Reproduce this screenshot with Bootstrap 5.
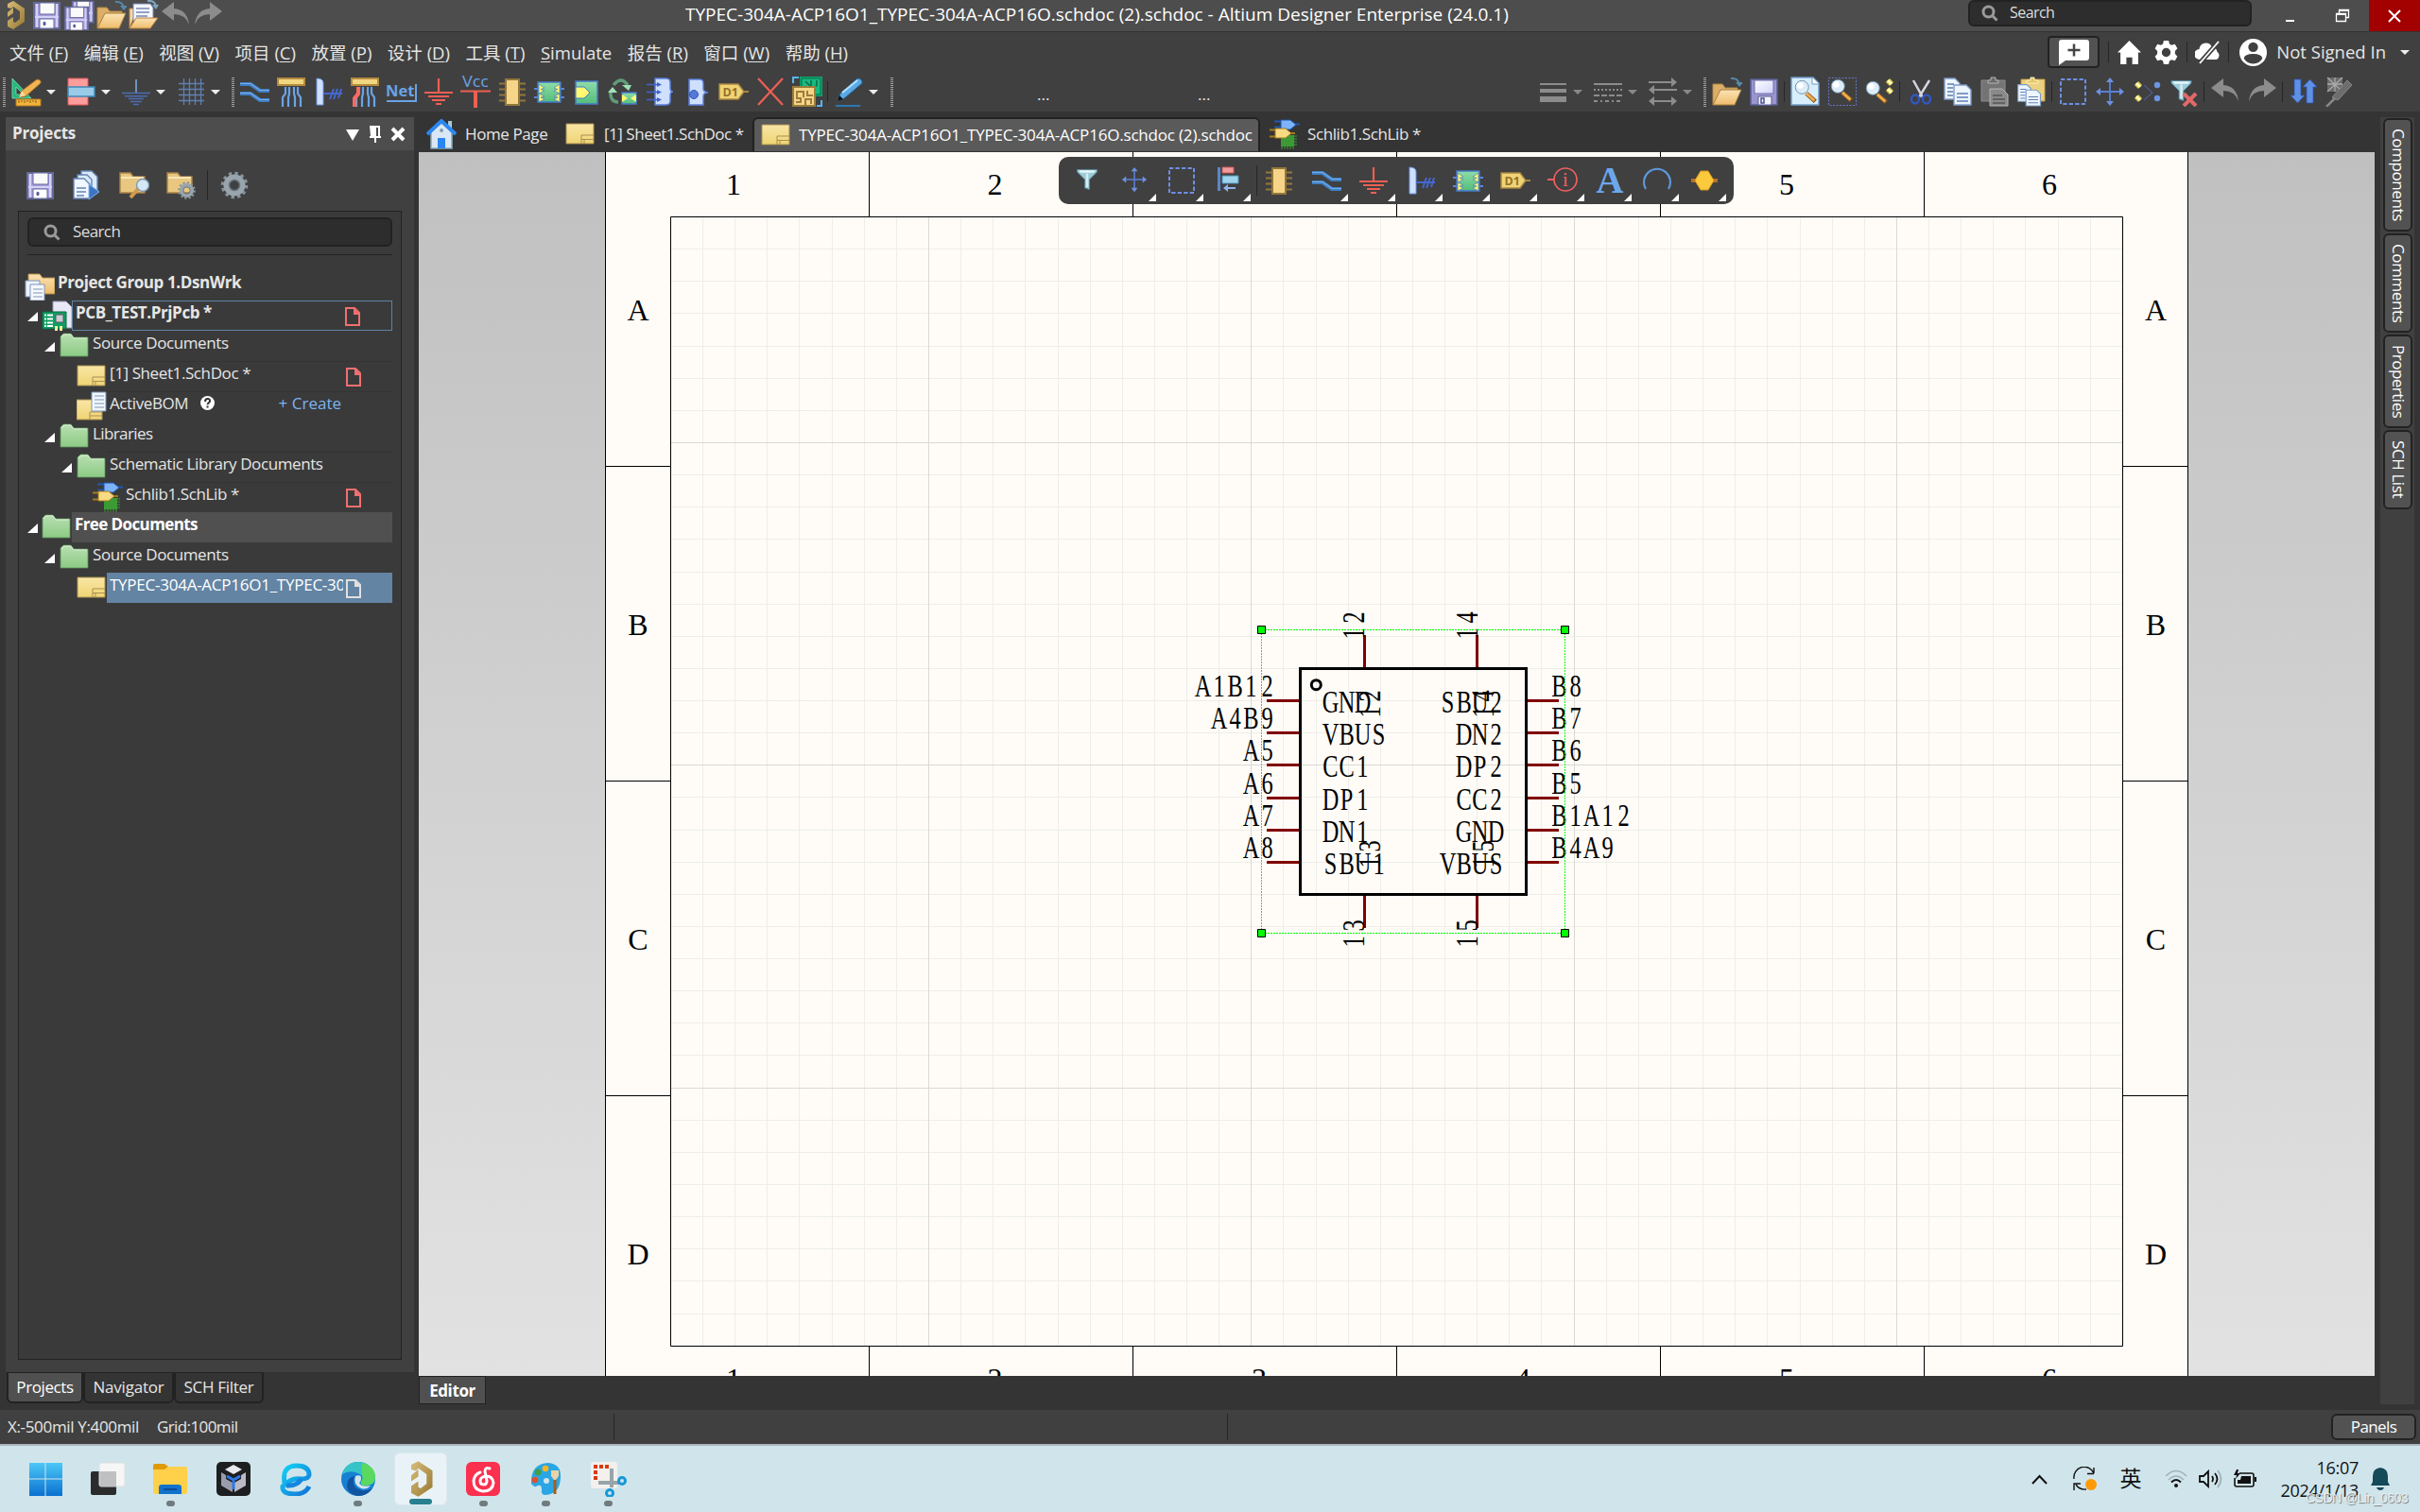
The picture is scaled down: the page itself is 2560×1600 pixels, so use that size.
<!DOCTYPE html>
<html lang="zh-CN">
<head>
<meta charset="utf-8">
<title>Altium Designer</title>
<link href="https://cdn.jsdelivr.net/npm/bootstrap@5.3.0/dist/css/bootstrap.min.css" rel="stylesheet">
<style>
html,body{height:100%}
body{width:2560px;height:1600px;overflow:hidden;background:#343434;color:#e6e6e6;font:17px/1.2 "Open Sans","Noto Sans CJK SC",sans-serif;letter-spacing:-.4px;white-space:nowrap}
svg{display:block;flex:none;letter-spacing:0}
.ic{width:32px;height:32px}
.titlebar{height:34px;background:#4d4d4d;border-bottom:1px solid #333}
.cell34{width:34px}
.app-title{color:#fff;font-size:19px;letter-spacing:0;padding:4px 0 0 487px}
.searchbox{background:#2d2d2d;border:2px solid #222;border-radius:6px;color:#ddd}
.topsearch{width:300px;height:28px;padding-left:12px;gap:12px;font-size:16px;letter-spacing:-.55px}
.winclose{width:54px;height:33px;background:#a30000}
.menubar{height:42px;background:#404040;font-size:18.5px;letter-spacing:0;padding-left:10px}
.menus{gap:16.5px;padding-top:2px}
.menubar u{text-underline-offset:2px;text-decoration-thickness:1px}
.vsep{width:1px;height:22px;background:#262626;flex:none}
.fbk{width:55px;height:34px;border:2px solid #222;border-radius:4px;background:#525252}
.toolbar{height:42px;background:#404040}
.tb{width:39px;height:34px;display:flex;align-items:center;justify-content:center;flex:none}
.dd{width:19px;flex:none;display:flex;padding-left:2px}
.dd::after{content:"";border:5px solid transparent;border-top-color:#eee;border-bottom:0}
.dim::after{border-top-color:#888}
.s5{width:5px;display:flex;justify-content:center;flex:none}
.grip{width:3px;height:31px;background:repeating-linear-gradient(#a0a0a0 0 1px,transparent 1px 2px);flex:none}
.main{height:1374px;padding-top:6px}
.leftpane{width:432px;margin-left:6px}
.pane-head{height:35px;background:#4d4d4d;font-weight:700;padding:0 5px 0 7px;letter-spacing:-.2px}
.pane-body{height:1293px;background:#404040;padding:0 13px}
.treebox{width:406px;height:1216px;border:1px solid #222;background:#3a3a3a;padding:6px 9px 0 9px}
.tree{margin:16px 0 0 -3px}
.tree-row{height:32px;display:flex}
.tree-row .lbl{flex:1;height:32px;padding:1px 0 0 3px;border-top:1px solid #343434;overflow:hidden;display:flex;justify-content:space-between;line-height:21px}
.tree-row .lbl.nb{border-color:transparent}
.tree-row .lbl.cur{border:1px solid #5f82a6}
.arrow{width:11px;height:10px;background:#fff;clip-path:polygon(100% 0,100% 100%,0 100%);margin-top:12px;flex:none}
.doc{margin-right:32px;margin-top:4px}
.btab{height:33px;border:2px solid #222;border-top-width:1px;border-radius:0 0 6px 6px;display:flex;align-items:center;justify-content:center}
.act{background:#505050;color:#fff}
.doctab{height:36px;display:flex;align-items:center}
.sheet-wrap{width:2069px;height:1295px;background:linear-gradient(#c0c0c0,#e2e2e2);position:relative;overflow:hidden}
.floatbar{position:absolute;left:677px;top:5px;width:714px;height:50px;border-radius:10px;background:#404040;padding-left:5px;display:flex}
.fb{width:50px;height:50px;padding:9px;position:relative}
.fb.m::after{content:"";position:absolute;right:2px;bottom:3px;width:8px;height:8px;background:#fff;clip-path:polygon(100% 0,100% 100%,0 100%)}
.rail{width:36px;height:1362px;background:#404040;padding:1px 2px 0 3px;gap:2px}
.vtab{writing-mode:vertical-rl;border:2px solid #222;border-radius:6px;background:#525252;color:#fff;display:flex;align-items:center;justify-content:center;width:31px}
.status{height:36px;background:#404040}
.panels{width:90px;height:28px;border:2px solid #222;border-radius:6px;background:#525252;color:#fff}
.taskbar{height:72px;background:#d0e5eb;border-top:2px solid #a9b9bf;color:#111;padding-left:20px}
.app{width:56px;height:56px;margin-right:10.2px;position:relative;display:flex;align-items:center;justify-content:center;border-radius:6px}
.app.on{background:#e9f3f7;border:1px solid #dbe8ee}
.app.run::after{content:"";position:absolute;bottom:-1px;width:9px;height:6px;border-radius:3px;background:#707b7f}
.app.on::after{content:"";position:absolute;bottom:0;width:24px;height:6px;border-radius:3px;background:#26808f}
.clock{font-size:18px;line-height:24px;letter-spacing:-.3px}
.watermark{position:absolute;right:13px;bottom:6px;font:14px/1.2 "Liberation Sans",sans-serif;letter-spacing:-.53px;color:#eef3f5;text-shadow:1px 1px 1px #666;opacity:.85}
.serif{font-family:"Liberation Serif",serif}
</style>
<script src="https://cdn.jsdelivr.net/npm/bootstrap@5.3.0/dist/js/bootstrap.bundle.min.js"></script>
</head>
<body>
<svg width="0" height="0" class="position-absolute">
<defs>
<linearGradient id="gy" x2="0" y2="1"><stop stop-color="#f9e6a6"/><stop offset="1" stop-color="#efd473"/></linearGradient>
<linearGradient id="gg" x2="0" y2="1"><stop stop-color="#b9dfb2"/><stop offset="1" stop-color="#8ccb84"/></linearGradient>
<linearGradient id="gf" x2="0" y2="1"><stop stop-color="#fbe3b4"/><stop offset="1" stop-color="#eebd6c"/></linearGradient>
<linearGradient id="gb" x2="0" y2="1"><stop stop-color="#4cc8f7"/><stop offset="1" stop-color="#0a70d0"/></linearGradient>
<linearGradient id="gl" x2="1" y2="1"><stop stop-color="#fff"/><stop offset="1" stop-color="#cfd4fb"/></linearGradient>
<linearGradient id="gt" x2="0" y2="1"><stop stop-color="#8fdca8"/><stop offset="1" stop-color="#52bd7b"/></linearGradient>
<linearGradient id="gd" x2="0" y2="1"><stop stop-color="#7d9dc6"/><stop offset="1" stop-color="#3f55a5"/></linearGradient>
<linearGradient id="gk" x2="1" y2="1"><stop stop-color="#d8bd7c"/><stop offset="1" stop-color="#96782f"/></linearGradient>
<linearGradient id="ge" x2="1" y2="1"><stop stop-color="#13d3f5"/><stop offset="1" stop-color="#1273d6"/></linearGradient>
<symbol id="altium" viewBox="0 0 32 32"><path d="M8 4l6-3 12 8v14l-12 8-6-3v-6l6-4v5l2 1 5-4v-8l-7-5-2 2-4-1zM8 13l6-5v6l-6 4z" fill="url(#gk)"/></symbol>
<symbol id="save" viewBox="0 0 32 32"><path d="M2 3h27v27H2z" fill="#a99fdc" stroke="#63699a" stroke-width="2"/><path d="M5 4v25M26 4v25" stroke="#d6d1f5" stroke-width="2"/><path d="M8 3h16v12H8z" fill="#fafafa" stroke="#63699a"/><path d="M3 17h25v2H3z" fill="#d6d1f5"/><path d="M8 20h15v10H8z" fill="#fff" stroke="#63699a"/><ellipse cx="13" cy="25" rx="1.6" ry="2.2" fill="#55609a"/></symbol>
<symbol id="saveall" viewBox="0 0 32 32"><g transform="translate(7 -1) scale(.82)"><use href="#save" width="32" height="32"/></g><g transform="translate(-1 5) scale(.9)"><use href="#save" width="32" height="32"/></g></symbol>
<symbol id="save2" viewBox="0 0 32 32"><path d="M2 3h28v27H2z" fill="#9a94cf" stroke="#5a5f94" stroke-width="1.5"/><path d="M6 4h20v14H6z" fill="url(#gl)" stroke="#6c70a5"/><path d="M10 21h14v9H10z" fill="#f4f4ff" stroke="#5a5f94"/><path d="M13 23h3v5h-3z" fill="none" stroke="#4c5390" stroke-width="1.5"/></symbol>
<symbol id="open" viewBox="0 0 32 32"><path d="M1 30V8h10l3 4h13v5" fill="#dcae67" stroke="#b48a48"/><path d="M1 30L9 14h22l-7 16z" fill="url(#gf)" stroke="#a87e3c"/><path d="M20 2q8-1 9 7" fill="none" stroke="#5a88a8" stroke-width="2"/><path d="M25 6l4 5 4-5z" fill="#5a88a8"/></symbol>
<symbol id="opendoc" viewBox="0 0 32 32"><path d="M1 30V9h5v8z" fill="#f3d9a7" stroke="#b9803c"/><path d="M5 4h18l3 4v14H5z" fill="#f5f8ff" stroke="#7786b5"/><path d="M8 9h14M8 13h14M8 17h12" stroke="#7786b5" stroke-width="1.4"/><path d="M1 30l7-11h23l-8 11z" fill="url(#gf)" stroke="#b9803c"/><path d="M20 1q8-1 9 6" fill="none" stroke="#7fa6c0" stroke-width="2"/><path d="M25 5l4 5 3-5z" fill="#7fa6c0"/></symbol>
<symbol id="undo" viewBox="0 0 32 32"><path d="M1 12L14 2v7q14 1 16 17Q26 15 14 15v7z" fill="#8c8c8c"/></symbol>
<symbol id="redo" viewBox="0 0 32 32"><path d="M31 12L18 2v7Q4 10 2 26 6 15 18 15v7z" fill="#8c8c8c"/></symbol>
<symbol id="draw" viewBox="0 0 32 32"><path d="M1 2v21h20zM5 11l8 8H5z" fill="#22b97e" fill-rule="evenodd" stroke="#7fe0b8" stroke-width=".8"/><path d="M5 24h26v7H5z" fill="#f2b53c" stroke="#b57b1c"/><path d="M8 25v3m3-3v2m3-2v3m3-3v2m3-2v3m3-3v2m3-2v3" stroke="#8a5a12"/><path d="M8 22l3-7L27 3q5 0 4 4L15 21z" fill="#f0b552" stroke="#a56a1e"/><path d="M8 22l3-7 4 5z" fill="#f4d8a0"/></symbol>
<symbol id="align" viewBox="0 0 32 32"><path d="M2 2h21v28H2z" fill="#ff9c9c" stroke="#e25858"/><path d="M2 11h28v10H2z" fill="#9acbe8" stroke="#3f88b5" stroke-width="1.5"/></symbol>
<symbol id="gndb" viewBox="0 0 32 32"><path d="M15 3h2v15h-2z" fill="#6f93c0"/><path d="M1 17.500h30M4 20.700h24M8 23.500h16M10 26.500h12M13 29.500h6" stroke="#4d6cb0" stroke-width="1.600"/></symbol>
<symbol id="grid" viewBox="0 0 32 32"><path d="M8.500 2v28M14.500 2v28M20.500 2v28M26.500 2v28M3 7.500h27M3 13.500h27M3 19.500h27M3 25.500h27" stroke="#5f7fb0" stroke-width="1.3"/></symbol>
<symbol id="wire" viewBox="0 0 32 32"><g fill="none" stroke="#3f7fc4" stroke-width="4"><path d="M1 8h11l10 7h10M1 18h11l10 7h10"/></g><g fill="none" stroke="#77aee6" stroke-width="1.2"><path d="M1 7.500h11l10 7h10M1 17.500h11l10 7h10"/></g></symbol>
<symbol id="bus" viewBox="0 0 32 32"><path d="M2 2h28v7H2z" fill="#f1d77f" stroke="#b58a3e" stroke-width="2"/><g fill="none" stroke="#6aa3e6" stroke-width="2.200"><path d="M10 11v7l-3 4v10M14 11v7l-1 4v10M19 11v7l1 4v10M23 11v7l3 4v10"/></g></symbol>
<symbol id="busr" viewBox="0 0 32 32"><use href="#bus" width="32" height="32"/><path d="M9 11v7l-4 5v9" fill="none" stroke="#fb6a5e" stroke-width="4"/></symbol>
<symbol id="entry" viewBox="0 0 32 32"><path d="M4 2q7 0 7 5v23H4z" fill="#cfe0fd" stroke="#6b93e2"/><path d="M11 18h20M18 24l4-11M22 24l4-11M27 23l3-10" stroke="#4468cf" stroke-width="2" fill="none"/></symbol>
<symbol id="net" viewBox="0 0 34 32"><path d="M1 26h31V8" fill="none" stroke="#6aa3e6" stroke-width="2"/><text x="0" y="21" font-family="Open Sans,sans-serif" font-weight="700" font-size="16.500" fill="#6aa3e6">Net</text></symbol>
<symbol id="gndr" viewBox="0 0 32 32"><path d="M16 2v15M1 17h30M5 21h22M9 25h14M13 29h6" stroke="#ee5f54" stroke-width="2.200"/></symbol>
<symbol id="vcc" viewBox="0 0 34 34"><text x="3" y="12" font-family="Open Sans,sans-serif" font-size="15.500" textLength="28" lengthAdjust="spacingAndGlyphs" fill="#6aa3e6">Vcc</text><path d="M1 16.500h32" stroke="#ee5f54" stroke-width="2"/><path d="M17 17v17" stroke="#ee5f54" stroke-width="4"/></symbol>
<symbol id="chip" viewBox="0 0 32 32"><path d="M2 7.500h28M2 13.500h28M2 19.500h28M2 25.500h28" stroke="#93773a" stroke-width="2"/><path d="M9 3h14v27H9z" fill="#f6d588" stroke="#93773a" stroke-width="2"/></symbol>
<symbol id="sheet" viewBox="0 0 32 32"><path d="M0 13h32M0 22h32" stroke="#5b86dd" stroke-width="2"/><path d="M4 6h24v21H4z" fill="url(#gt)" stroke="#4778c9" stroke-width="1.4"/><path d="M5 8l6 4-4 1.500 4 1.500-6 3 6 3-4 1 4 2-6 3zM27 8l-6 4 4 1.500-4 1.500 6 3-6 3 4 1-4 2 6 3z" fill="#fff870" stroke="#4778c9" stroke-width=".7"/></symbol>
<symbol id="port" viewBox="0 0 32 32"><path d="M5 5h23v24H5z" fill="url(#gt)" stroke="#4778c9" stroke-width="1.500"/><path d="M5 11h9l6 6-6 6H5z" fill="#fff870" stroke="#4778c9"/></symbol>
<symbol id="recyc" viewBox="0 0 32 32"><path d="M6 9q8-10 15 0" fill="none" stroke="#5f9d79" stroke-width="3.500"/><path d="M15 9h10l-3 6z" fill="#9fe0b6"/><path d="M11 27q-9 0-8-12" fill="none" stroke="#5f9d79" stroke-width="3.500"/><path d="M0 17l5-6 5 6z" fill="#9fe0b6"/><path d="M15 17h15v12H15z" fill="url(#gt)" stroke="#4778c9" stroke-width="1.400"/><path d="M15 19l6 4-6 4zM30 19l-6 4 6 4z" fill="#fff870"/></symbol>
<symbol id="hcon" viewBox="0 0 32 32"><path d="M11 2h11q5 0 5 4v6q0 4 3 4-3 0-3 4v6q0 4-5 4H11z" fill="#cfe0fd" stroke="#5b7fdc" stroke-width="1.500"/><path d="M2 8.500h13M2 16.500h13M2 24.500h13" stroke="#3f63cc" stroke-width="1.400"/><path d="M13 6l5 2.500-5 2.500zM13 14l5 2.500-5 2.500zM13 22l5 2.500-5 2.500z" fill="#3f63cc"/></symbol>
<symbol id="hent" viewBox="0 0 32 32"><path d="M8 3h11q4 0 4 4v6q0 3 5 4-5 0-5 4v9H8z" fill="#cfe0fd" stroke="#5b7fdc" stroke-width="1.500"/><circle cx="13" cy="19" r="4.500" fill="#5478d8" stroke="#3657b5"/></symbol>
<symbol id="d1" viewBox="0 0 32 32"><path d="M26 16h6" stroke="#a98740" stroke-width="2"/><path d="M1 8h20l6 8-6 8H1z" fill="#f0d474" stroke="#a98740" stroke-width="1.500"/><text x="4.500" y="20.500" font-family="Open Sans,sans-serif" font-weight="700" font-size="12.500" fill="#96702a">D1</text></symbol>
<symbol id="xr" viewBox="0 0 32 32"><path d="M3 2l26 28M29 2L3 30" stroke="#ee5f54" stroke-width="2.200"/></symbol>
<symbol id="pcbx" viewBox="0 0 32 32"><path d="M8 0h24v21H8z" fill="#10a06c"/><path d="M10 2h20v17H10z" fill="#19b980" stroke="#0b6d48"/><path d="M14 5l5 5v6M20 4v6M26 4v5l-4 5" fill="none" stroke="#0b6d48" stroke-width="1.600"/><path d="M1 11h23v20H1z" fill="#f6d588" stroke="#9b7d3c" stroke-width="2"/><path d="M4 27h5v-4H5v-7h7v6M16 15v5h6M14 30v-6h6v5" fill="none" stroke="#9b7d3c" stroke-width="2"/><path d="M1 7V1h6M31 25v6h-5" fill="none" stroke="#56b6f0" stroke-width="2"/></symbol>
<symbol id="pen" viewBox="0 0 32 32"><path d="M4 26l3-8L25 2q5 0 5 5L11 23z" fill="#5aaae8" stroke="#256ea8"/><path d="M9 17L25 4" stroke="#b6e2ff" stroke-width="2"/><path d="M4 26l2-6 4 4z" fill="#111"/><path d="M2 31h26" stroke="#2a78ad" stroke-width="2"/></symbol>
<symbol id="lw" viewBox="0 0 32 32"><path d="M2 8h28" stroke="#8c8c8c" stroke-width="2"/><path d="M2 15h28" stroke="#8c8c8c" stroke-width="4"/><path d="M2 24h28" stroke="#8c8c8c" stroke-width="6"/></symbol>
<symbol id="ls" viewBox="0 0 32 32"><g stroke="#8c8c8c" stroke-width="2"><path d="M1 8h30"/><path d="M1 14h30" stroke-dasharray="2 2"/><path d="M1 20h30" stroke-dasharray="6 2"/><path d="M1 26h30" stroke-dasharray="4 3 2 3"/></g></symbol>
<symbol id="la" viewBox="0 0 32 32"><g stroke="#8c8c8c" stroke-width="2"><path d="M1 6h27M4 14h27M4 26h25"/></g><path d="M25 1l6 5-6 5zM7 9l-6 5 6 5zM7 21l-6 5 6 5zM25 21l6 5-6 5z" fill="#8c8c8c"/></symbol>
<symbol id="mag" viewBox="0 0 32 32"><path d="M17 18l10 9" stroke="#8a5a20" stroke-width="5"/><path d="M17 18l9 8" stroke="#f0ab4e" stroke-width="3"/><circle cx="12" cy="11" r="7.500" fill="#dcecf8" stroke="#7090a8"/><circle cx="10" cy="9" r="3.500" fill="#fff"/></symbol>
<symbol id="zpage" viewBox="0 0 32 32"><path d="M1 1h23l6 6v23H1z" fill="#d9eefb" stroke="#6f9cc8" stroke-width="1.400"/><path d="M23 1v7h7" fill="#fff" stroke="#6f9cc8"/><use href="#mag" x="1" y="1" width="30" height="30"/></symbol>
<symbol id="zarea" viewBox="0 0 32 32"><path d="M1.500 1.500h29v29h-29z" fill="none" stroke="#6878c8" stroke-dasharray="2 1.500"/><use href="#mag" width="30" height="30"/></symbol>
<symbol id="zsel" viewBox="0 0 32 32"><use href="#mag" x="-2" y="2" width="30" height="30"/><path d="M25 4l4 4M25 13l4 4" stroke="#d2c23c" stroke-width="6"/><path d="M25 4l4 4M25 13l4 4" stroke="#ffffc0" stroke-width="3"/></symbol>
<symbol id="cut" viewBox="0 0 32 32"><path d="M8 4l10 18M25 4L14 22" stroke="#d5d5e0" stroke-width="2.500"/><g fill="none" stroke="#3157c0" stroke-width="2.500"><ellipse cx="10" cy="24" rx="4" ry="4.500"/><ellipse cx="22" cy="24" rx="4" ry="4.500"/></g></symbol>
<symbol id="copy" viewBox="0 0 32 32"><g fill="#edf5fd" stroke="#7d9bc9" stroke-width="1.400"><path d="M2 2h11l5 5v17H2z"/><path d="M12 9h13l5 5v16H12z"/></g><path d="M5 8h7M5 12h6M5 16h6M5 20h6M15 18h12M15 22h12M15 26h12" stroke="#5f7db5" stroke-width="1.300"/></symbol>
<symbol id="pasteg" viewBox="0 0 32 32"><path d="M2 4h25v22H2z" fill="#747474" stroke="#8c8c8c"/><path d="M9 7h11V4h-3V1h-5v3H9z" fill="#6a6a6a" stroke="#b5b5b5"/><path d="M11 13h13l6 6v12H11z" fill="#8a8a8a" stroke="#b5b5b5"/><path d="M14 20h10M14 24h13M14 28h13" stroke="#555" stroke-width="1.500"/></symbol>
<symbol id="pastes" viewBox="0 0 32 32"><path d="M5 3h25v23H5z" fill="#ecd27e" stroke="#c09b45"/><path d="M11 7h12V4h-4V1h-4v3h-4z" fill="#e5c468" stroke="#fff2c0"/><g transform="translate(0 7) scale(.85 .8)"><use href="#copy" width="32" height="32"/></g></symbol>
<symbol id="selr" viewBox="0 0 32 32"><path d="M3 3h26v26H3z" fill="none" stroke="#6f8fe6" stroke-width="2" stroke-dasharray="4.300 2.200"/></symbol>
<symbol id="move" viewBox="0 0 32 32"><path d="M16 4v24M4 16h24" stroke="#5a7fd8" stroke-width="1.800"/><path d="M16 1l4 5h-8zM16 31l4-5h-8zM1 16l5-4v8zM31 16l-5-4v8z" fill="#6f90e0"/></symbol>
<symbol id="desel" viewBox="0 0 32 32"><path d="M5 7l4 4M5 21l4 4" stroke="#d2c23c" stroke-width="6"/><path d="M5 7l4 4M5 21l4 4" stroke="#ffffc0" stroke-width="3"/><path d="M13 9l9 8-9 8" fill="none" stroke="#5568c0"/><circle cx="27" cy="9" r="3.200" fill="#6c96e4"/><circle cx="27" cy="23" r="3.200" fill="#6c96e4"/></symbol>
<symbol id="funnel" viewBox="0 0 32 32"><path d="M3 3h26v3L19 16v13l-6-2V16L3 6z" fill="#9ccbd8" stroke="#4f8497"/><path d="M5 4h22l-2 3H7z" fill="#e5f5f8"/><path d="M16 8v18" stroke="#d3edf2" stroke-width="3"/></symbol>
<symbol id="funx" viewBox="0 0 32 32"><use href="#funnel" x="-1" y="2" width="29" height="26"/><path d="M16 18l13 13M29 18L16 31" stroke="#e06a6a" stroke-width="4"/></symbol>
<symbol id="updn" viewBox="0 0 32 32"><path d="M6 3h7v17h4L9.500 28 2 20h4zM19 28h7V11h4L22.500 3 15 11h4z" fill="#5f90e6" stroke="#2f57b4" stroke-width=".8"/></symbol>
<symbol id="probe" viewBox="0 0 32 32"><path d="M2 1h16v15H2z" fill="#6c6c6c"/><path d="M2 1l16 15M18 1L2 16M10 1v15M2 8h16" stroke="#aaa" stroke-width="1.300"/><path d="M7 22L23 4l5 5-15 16z" fill="#6d6d6d" stroke="#888"/><path d="M10 23l-9 9" stroke="#888" stroke-width="2.500"/></symbol>
<symbol id="fold" viewBox="0 0 32 32"><path d="M1 3h11l3 4h12v17H1z" fill="#e8c781" stroke="#a98348" stroke-width="1.400"/><path d="M2 8h24" stroke="#f9e6b8" stroke-width="2"/></symbol>
<symbol id="gear" viewBox="0 0 32 32"><circle cx="16" cy="16" r="12.500" fill="none" stroke="#87939c" stroke-width="3.500" stroke-dasharray="3.300 3.245"/><circle cx="16" cy="16" r="8.500" fill="none" stroke="#98a5ad" stroke-width="6"/><circle cx="16" cy="16" r="5.500" fill="none" stroke="#66727c" stroke-width="1.500"/></symbol>
<symbol id="foldmag" viewBox="0 0 32 32"><use href="#fold" width="32" height="32"/><path d="M12 29l8-9" stroke="#d59b4b" stroke-width="4"/><circle cx="25" cy="16" r="6.500" fill="#d5e6f5" stroke="#8099ae" stroke-width="1.400"/></symbol>
<symbol id="foldgear" viewBox="0 0 32 32"><use href="#fold" width="32" height="32"/><use href="#gear" x="11" y="11" width="21" height="21"/></symbol>
<symbol id="compile" viewBox="0 0 32 32"><g fill="#dbeafa" stroke="#6485b5" stroke-width="1.400"><path d="M11 1h11l6 6v15H11z"/><path d="M7 5h10l5 5v15H7z"/><path d="M3 9h11l6 6v15H3z" fill="#f0f7fe"/></g><path d="M6 19h10M6 23h10M6 27h8" stroke="#6485b5" stroke-width="1.500"/><path d="M19 15l11 8-11 8z" fill="#3f74c4" stroke="#7fb0ee"/></symbol>
<symbol id="house" viewBox="0 0 32 32"><path d="M23 2h4v10h-4z" fill="#aac9d4"/><path d="M5 13L16 4l11 9v18H5z" fill="#dbe7f4" stroke="#88abb8" stroke-width="1.500"/><path d="M1 16L16 2l15 14" fill="none" stroke="#2d88f0" stroke-width="4"/><circle cx="16" cy="12" r="2" fill="#7f9fb0"/><path d="M12 20h8v11h-8z" fill="#2a86f2"/></symbol>
<symbol id="sdoc" viewBox="0 0 32 32"><path d="M1 5h29v21H1z" fill="url(#gy)" stroke="#a98f52"/><path d="M17 26v-9h13M17 21.500h13M20 26v-4.500" fill="none" stroke="#a98f52"/></symbol>
<symbol id="slib" viewBox="0 0 32 32"><path d="M5 2.500h8M5 8.500h8M24 5.500h8" stroke="#1f57b0" stroke-width="2"/><path d="M12 1h10l6 5-6 5H12z" fill="#7db3fb" stroke="#1f57b0"/><path d="M12 17h14v12H12z" fill="#3c9a35"/><path d="M13 28v4m3-4v4m3-4v4m3-4v4m3-4v4M26 18h3m-3 3h3m-3 3h3m-3 3h3" stroke="#3c9a35"/><path d="M0 11.500h8M0 18.500h8M22 15h5" stroke="#a67a1e" stroke-width="2"/><path d="M6 10h11l6 5-6 5H6z" fill="#f8da83" stroke="#a67a1e"/></symbol>
<symbol id="gfold" viewBox="0 0 32 32"><path d="M1 27V6l3-3h8l3 4h15v20z" fill="url(#gg)" stroke="#5e8f5c" stroke-width=".8"/><path d="M2 7l3-3h7l3 4h14" fill="none" stroke="#d6f0d0"/></symbol>
<symbol id="pgrp" viewBox="0 0 32 32"><path d="M4 4h12l3 4h13v17H4z" fill="url(#gf)" stroke="#b48a48"/><path d="M1 11h15v17H1z" fill="#eaf2fc" stroke="#7f95b8"/><path d="M6 15h15v17H6z" fill="#f4f9ff" stroke="#7f95b8"/><path d="M9 20h10M9 24h10M9 28h10" stroke="#7f95b8" stroke-width="1.200"/></symbol>
<symbol id="pcb" viewBox="0 0 32 32"><path d="M12 1h14l6 6v22H12z" fill="#e8e8f6" stroke="#9a9ab8"/><path d="M1 12h25v18H1z" fill="#0f9d63" stroke="#0a6a43"/><path d="M3 15.500h9M3 19.500h9M3 23.500h9M3 27h9" stroke="#fff" stroke-width="2" stroke-dasharray="2 1 6 1"/><path d="M15 15h8v8h-8z" fill="#c9ccd0" stroke="#575d60"/><path d="M14 27h3v5h-3zM19 27h3v5h-3z" fill="#f5f3a0"/></symbol>
<symbol id="bom" viewBox="0 0 32 32"><path d="M0 9h27v21H0z" fill="url(#gy)" stroke="#a98f52"/><path d="M14 30v-8h13M14 26h13" fill="none" stroke="#a98f52"/><path d="M16 1h15v20H16z" fill="#f2f7ff" stroke="#7f95b8"/><path d="M19 5h10M19 9h10M19 13h10M19 17h10" stroke="#7f95b8" stroke-width="1.200"/></symbol>
<symbol id="fil" viewBox="0 0 18 22"><path d="M2 2h9l5 5v13H2z" fill="none" stroke="currentColor" stroke-width="2"/><path d="M10 2l7 7h-7z" fill="currentColor"/></symbol>
<symbol id="srch" viewBox="0 0 18 18"><circle cx="7.500" cy="7.500" r="5.500" fill="none" stroke="#9a9a9a" stroke-width="3"/><path d="M11.500 11.500l5 5" stroke="#9a9a9a" stroke-width="3"/></symbol>
</defs></svg>

<div class="d-flex flex-column">
<header class="titlebar d-flex align-items-start">
  <div class="d-flex">
    <div class="cell34"><svg class="ic"><use href="#altium"/></svg></div>
    <div class="cell34"><svg class="ic"><use href="#save"/></svg></div>
    <div class="cell34"><svg class="ic"><use href="#saveall"/></svg></div>
    <div class="cell34"><svg class="ic"><use href="#open"/></svg></div>
    <div class="cell34"><svg class="ic"><use href="#opendoc"/></svg></div>
    <div class="cell34"><svg class="ic"><use href="#undo"/></svg></div>
    <div class="cell34"><svg class="ic"><use href="#redo"/></svg></div>
  </div>
  <div class="app-title flex-grow-1">TYPEC-304A-ACP16O1_TYPEC-304A-ACP16O.schdoc (2).schdoc - Altium Designer Enterprise (24.0.1)</div>
  <div class="searchbox topsearch d-flex align-items-center"><svg width="18" height="18"><use href="#srch"/></svg><span>Search</span></div>
  <svg width="124" height="33" viewBox="0 0 124 33" fill="none" stroke="#fff"><path d="M36 22h9" stroke-width="2"/><path d="M89.500 14.500h10v8h-10zM92.500 14v-3.500h10v8h-3" stroke-width="1.300"/><path d="M89 15h11M92 11h11" stroke-width="2"/></svg>
  <div class="winclose d-flex align-items-center justify-content-center"><svg width="14" height="14" viewBox="0 0 14 14"><path d="M1 1l12 12M13 1L1 13" stroke="#fff" stroke-width="2"/></svg></div>
</header>

<nav class="menubar d-flex align-items-center">
  <div class="menus d-flex"><span>文件 (<u>F</u>)</span><span>编辑 (<u>E</u>)</span><span>视图 (<u>V</u>)</span><span>项目 (<u>C</u>)</span><span>放置 (<u>P</u>)</span><span>设计 (<u>D</u>)</span><span>工具 (<u>T</u>)</span><span><u>S</u>imulate</span><span>报告 (<u>R</u>)</span><span>窗口 (<u>W</u>)</span><span>帮助 (<u>H</u>)</span></div>
  <div class="ms-auto d-flex align-items-center" style="padding-right:4px">
    <div class="fbk d-flex align-items-center justify-content-center"><svg width="34" height="28" viewBox="0 0 34 28"><path d="M4 1h26q3 0 3 3v16q0 3-3 3H8l-7 5V4q0-3 3-3z" fill="#fff"/><path d="M17 5.500v13M10.500 12h13" stroke="#444" stroke-width="2.500"/></svg></div>
    <div class="vsep" style="margin:0 9px 0 9px"></div>
    <svg width="25" height="25" viewBox="0 0 24 24" fill="#fff"><path d="M12 0l12 12h-3v12h-6v-7H9v7H3V12H0z"/></svg>
    <svg width="25" height="25" viewBox="0 0 24 24" style="margin:0 9px 0 14px"><path fill="#fff" fill-rule="evenodd" d="M9.500 0h5l.8 3.400 2.200 1.200 3.400-1 2.500 4.300L21 10.500v3l2.400 2.600-2.500 4.300-3.400-1-2.200 1.200-.8 3.400h-5l-.8-3.400-2.200-1.200-3.400 1L.6 16.100 3 13.500v-3L.6 7.900l2.500-4.300 3.400 1 2.200-1.200zM12 7.500a4.500 4.500 0 100 9 4.500 4.500 0 000-9z"/></svg>
    <div class="vsep"></div>
    <svg width="27" height="25" viewBox="0 0 27 25" style="margin:0 8px"><path d="M5 20a5.500 5.500 0 01-.5-11 7 7 0 0113-3 6.500 6.500 0 016 6 4.500 4.500 0 01-1 8z" fill="#fff"/><path d="M26 0L4 25" stroke="#404040" stroke-width="5"/><path d="M25 1L5 24" stroke="#fff" stroke-width="1.800"/></svg>
    <div class="vsep"></div>
    <svg width="29" height="29" viewBox="0 0 28 28" style="margin:0 10px 0 11px"><circle cx="14" cy="14" r="14" fill="#fff"/><circle cx="14" cy="8.500" r="5" fill="#404040"/><path d="M4.500 20q1-4.500 9.500-4.500t9.500 4.500q-3 5.500-9.500 5.500T4.500 20z" fill="#404040"/></svg>
    <span>Not Signed In</span><div class="dd" style="margin-left:13px"></div>
  </div>
</nav>

<div class="toolbar d-flex align-items-center">
  <div class="grip" style="margin:0 2px 0 3px"></div>
  <div class="tb"><svg class="ic"><use href="#draw"/></svg></div><div class="dd"></div>
  <div class="tb"><svg class="ic"><use href="#align"/></svg></div><div class="dd"></div>
  <div class="tb"><svg class="ic"><use href="#gndb"/></svg></div><div class="dd"></div>
  <div class="tb"><svg class="ic"><use href="#grid"/></svg></div><div class="dd"></div>
  <div class="grip" style="margin:0 1px 0 5px"></div>
  <div class="tb"><svg class="ic"><use href="#wire"/></svg></div>
  <div class="tb"><svg class="ic"><use href="#bus"/></svg></div>
  <div class="tb"><svg class="ic"><use href="#entry"/></svg></div>
  <div class="tb"><svg class="ic"><use href="#busr"/></svg></div>
  <div class="tb"><svg width="34" height="32"><use href="#net"/></svg></div>
  <div class="tb"><svg class="ic"><use href="#gndr"/></svg></div>
  <div class="tb"><svg width="34" height="34"><use href="#vcc"/></svg></div>
  <div class="tb"><svg class="ic"><use href="#chip"/></svg></div>
  <div class="tb"><svg class="ic"><use href="#sheet"/></svg></div>
  <div class="tb"><svg class="ic"><use href="#port"/></svg></div>
  <div class="tb"><svg class="ic"><use href="#recyc"/></svg></div>
  <div class="tb"><svg class="ic"><use href="#hcon"/></svg></div>
  <div class="tb"><svg class="ic"><use href="#hent"/></svg></div>
  <div class="tb"><svg class="ic"><use href="#d1"/></svg></div>
  <div class="tb"><svg class="ic"><use href="#xr"/></svg></div>
  <div class="tb"><svg class="ic"><use href="#pcbx"/></svg></div>
  <div class="s5"><div class="vsep"></div></div>
  <div class="tb"><svg class="ic"><use href="#pen"/></svg></div><div class="dd"></div>
  <div class="grip" style="margin-left:6px"></div>
  <span style="margin-left:152px;width:170px;margin-top:6px;letter-spacing:0">...</span><span style="margin-top:6px;letter-spacing:0">...</span>
  <div class="d-flex align-items-center ms-auto" style="padding-right:65px">
    <div class="tb"><svg class="ic"><use href="#lw"/></svg></div><div class="dd dim"></div>
    <div class="tb"><svg class="ic"><use href="#ls"/></svg></div><div class="dd dim"></div>
    <div class="tb"><svg class="ic"><use href="#la"/></svg></div><div class="dd dim"></div>
    <div class="grip" style="margin:0 2px 0 5px"></div>
    <div class="tb"><svg class="ic"><use href="#open"/></svg></div>
    <div class="tb"><svg class="ic"><use href="#save2"/></svg></div>
    <div class="s5"><div class="vsep"></div></div>
    <div class="tb"><svg class="ic"><use href="#zpage"/></svg></div>
    <div class="tb"><svg class="ic"><use href="#zarea"/></svg></div>
    <div class="tb"><svg class="ic"><use href="#zsel"/></svg></div>
    <div class="s5"><div class="vsep"></div></div>
    <div class="tb"><svg class="ic"><use href="#cut"/></svg></div>
    <div class="tb"><svg class="ic"><use href="#copy"/></svg></div>
    <div class="tb"><svg class="ic"><use href="#pasteg"/></svg></div>
    <div class="tb"><svg class="ic"><use href="#pastes"/></svg></div>
    <div class="s5"><div class="vsep"></div></div>
    <div class="tb"><svg class="ic"><use href="#selr"/></svg></div>
    <div class="tb"><svg class="ic"><use href="#move"/></svg></div>
    <div class="tb"><svg class="ic"><use href="#desel"/></svg></div>
    <div class="tb"><svg class="ic"><use href="#funx"/></svg></div>
    <div class="s5"><div class="vsep"></div></div>
    <div class="tb"><svg class="ic"><use href="#undo"/></svg></div>
    <div class="tb"><svg class="ic"><use href="#redo"/></svg></div>
    <div class="s5"><div class="vsep"></div></div>
    <div class="tb"><svg class="ic"><use href="#updn"/></svg></div>
    <div class="tb"><svg class="ic"><use href="#probe"/></svg></div>
  </div>
</div>

<main class="main d-flex">
  <aside class="leftpane">
    <div class="pane-head d-flex align-items-center"><span>Projects</span>
      <svg class="ms-auto" width="72" height="20" viewBox="0 0 72 20" fill="#fff"><path d="M5 5h14l-7 12zM30 1h11v11h1v2h-5v5h-2v-5h-5v-2h1z"/><path d="M37 3h2v9h-2z" fill="#4d4d4d"/><path d="M54 4l12 12M66 4L54 16" stroke="#fff" stroke-width="4"/></svg></div>
    <div class="pane-body">
      <div class="d-flex align-items-center" style="height:64px;padding:10px 0 0 8px">
        <svg class="ic me-3"><use href="#save"/></svg><svg class="ic" style="margin-right:19px"><use href="#compile"/></svg><svg class="ic" style="margin-right:18px"><use href="#foldmag"/></svg><svg class="ic" style="margin-right:11px"><use href="#foldgear"/></svg><div class="vsep" style="height:32px"></div><svg class="ic" style="margin-left:12px"><use href="#gear"/></svg>
      </div>
      <div class="treebox">
        <div class="searchbox d-flex align-items-center" style="height:31px;padding-left:15px;gap:13px;letter-spacing:-.6px"><svg width="18" height="18"><use href="#srch"/></svg><span>Search</span></div>
        <div style="height:9px;border-bottom:1px solid #222"></div>
        <div class="tree">
          <div class="tree-row"><svg class="ic"><use href="#pgrp"/></svg><div class="lbl nb fw-bold"><span>Project Group 1.DsnWrk</span></div></div>
          <div class="tree-row"><i class="arrow" style="margin-left:3px"></i><svg class="ic" style="margin-left:4px"><use href="#pcb"/></svg><div class="lbl cur fw-bold"><span>PCB_TEST.PrjPcb *</span><svg class="doc" width="18" height="22" color="#f07070"><use href="#fil"/></svg></div></div>
          <div class="tree-row"><i class="arrow" style="margin-left:21px"></i><svg class="ic" style="margin-left:5px"><use href="#gfold"/></svg><div class="lbl nb"><span>Source Documents</span></div></div>
          <div class="tree-row"><svg class="ic" style="margin-left:55px"><use href="#sdoc"/></svg><div class="lbl"><span>[1] Sheet1.SchDoc *</span><svg class="doc" width="18" height="22" color="#f07070"><use href="#fil"/></svg></div></div>
          <div class="tree-row"><svg class="ic" style="margin-left:55px"><use href="#bom"/></svg><div class="lbl"><span class="d-flex"><span>ActiveBOM</span><svg width="15" height="15" viewBox="0 0 15 15" style="margin:3px 0 0 13px"><circle cx="7.500" cy="7.500" r="7.500" fill="#fff"/><path d="M5 6q0-3 2.700-3T10 5.500C10 7 7.600 7 7.600 9.300" fill="none" stroke="#333" stroke-width="2"/><path d="M6.500 10.500h2v2h-2z" fill="#333"/></svg></span><span style="color:#7db4f0;margin-right:54px;letter-spacing:0">+ Create</span></div></div>
          <div class="tree-row"><i class="arrow" style="margin-left:21px"></i><svg class="ic" style="margin-left:5px"><use href="#gfold"/></svg><div class="lbl nb" style="letter-spacing:-.6px"><span>Libraries</span></div></div>
          <div class="tree-row"><i class="arrow" style="margin-left:39px"></i><svg class="ic" style="margin-left:5px"><use href="#gfold"/></svg><div class="lbl"><span>Schematic Library Documents</span></div></div>
          <div class="tree-row"><svg class="ic" style="margin-left:72px"><use href="#slib"/></svg><div class="lbl"><span>Schlib1.SchLib *</span><svg class="doc" width="18" height="22" color="#f07070"><use href="#fil"/></svg></div></div>
          <div class="tree-row"><i class="arrow" style="margin-left:3px"></i><svg class="ic" style="margin-left:4px"><use href="#gfold"/></svg><div class="lbl nb fw-bold text-white" style="background:#505050;letter-spacing:-.6px"><span>Free Documents</span></div></div>
          <div class="tree-row"><i class="arrow" style="margin-left:21px"></i><svg class="ic" style="margin-left:5px"><use href="#gfold"/></svg><div class="lbl nb"><span>Source Documents</span></div></div>
          <div class="tree-row"><svg class="ic" style="margin-left:55px"><use href="#sdoc"/></svg><div class="lbl nb text-white" style="background:#6384a3"><span class="overflow-hidden" style="width:247px;letter-spacing:-.25px">TYPEC-304A-ACP16O1_TYPEC-304A</span><svg class="doc" width="18" height="22" color="#e0e0e0"><use href="#fil"/></svg></div></div>
        </div>
      </div>
    </div>
    <div class="d-flex"><div class="btab act" style="width:81px;margin-left:1px">Projects</div><div class="btab" style="width:96px;letter-spacing:-.2px">Navigator</div><div class="btab" style="width:95px;letter-spacing:-.3px">SCH Filter</div></div>
  </aside>

  <section style="margin-left:5px;width:2069px">
    <div class="d-flex" style="height:37px">
      <div class="doctab" style="width:145px;padding-left:8px;gap:9px"><svg class="ic"><use href="#house"/></svg><span>Home Page</span></div>
      <div class="doctab" style="width:208px;padding-left:10px;gap:9px;letter-spacing:-.48px"><svg class="ic"><use href="#sdoc"/></svg><span>[1] Sheet1.SchDoc *</span></div>
      <div class="doctab text-white" style="width:537px;padding-left:7px;gap:8px;letter-spacing:-.19px;background:#5a5a5a;border:2px solid #222;border-bottom:0;border-radius:6px 6px 0 0"><svg class="ic"><use href="#sdoc"/></svg><span>TYPEC-304A-ACP16O1_TYPEC-304A-ACP16O.schdoc (2).schdoc</span></div>
      <div class="doctab" style="padding-left:10px;gap:8px"><svg class="ic"><use href="#slib"/></svg><span>Schlib1.SchLib *</span></div>
    </div>
    <div class="sheet-wrap">
      <svg width="2069" height="1295" viewBox="443 161 2069 1295">
        <path d="M640.500 150v1320h1674V150z" fill="#fffcf7" stroke="#000"/>
        <g id="gridlines" shape-rendering="crispEdges"></g>
        <path d="M709.500 229.500h1536v1195h-1536zM919.500 150v79M1198.500 150v79M1477.500 150v79M1756.500 150v79M2035.500 150v79M919.500 1424v40M1198.500 1424v40M1477.500 1424v40M1756.500 1424v40M2035.500 1424v40M640 493.500h69M640 826.500h69M640 1159.500h69M2245 493.500h69M2245 826.500h69M2245 1159.500h69" fill="none" stroke="#000"/>
        <g class="serif" font-size="32" text-anchor="middle">
          <text x="776" y="206">1</text><text x="1052.500" y="206">2</text><text x="1890" y="206">5</text><text x="2168" y="206">6</text>
          <text x="776" y="1470">1</text><text x="1052.500" y="1470">2</text><text x="1332" y="1470">3</text><text x="1611" y="1470">4</text><text x="1890" y="1470">5</text><text x="2168" y="1470">6</text>
          <text x="675" y="338.500">A</text><text x="675" y="671.500">B</text><text x="675" y="1004.500">C</text><text x="675" y="1337.500">D</text>
          <text x="2280.500" y="338.500">A</text><text x="2280.500" y="671.500">B</text><text x="2280.500" y="1004.500">C</text><text x="2280.500" y="1337.500">D</text>
        </g>
        <path d="M1340 741.500h36M1340 775.500h36M1340 809.500h36M1340 844.500h36M1340 878.500h36M1340 912.500h36M1613 741.500h36M1613 775.500h36M1613 809.500h36M1613 844.500h36M1613 878.500h36M1613 912.500h36M1443.500 672v37M1562.500 672v37M1443.500 945v37M1562.500 945v37" stroke="#800000" stroke-width="3"/>
        <path d="M1375.500 707.500h239v239h-239z" fill="none" stroke="#000" stroke-width="3"/>
        <circle cx="1392.300" cy="724.700" r="5" fill="none" stroke="#000" stroke-width="3"/>
        <g id="labels" class="serif" font-size="33" text-anchor="middle"></g>
        <path d="M1334.500 666.500h321M1334.500 987.500h321M1334.500 666.500v321M1655.500 666.500v321" fill="none" stroke="#0f0" stroke-dasharray="2 1" shape-rendering="crispEdges"/>
        <path d="M1330.500 662.500h8v8h-8zM1651.500 662.500h8v8h-8zM1330.500 983.500h8v8h-8zM1651.500 983.500h8v8h-8z" fill="#0f0" stroke="#000"/>
      </svg>
      <div class="floatbar">
        <div class="fb"><svg class="ic" viewBox="0 0 32 32"><use href="#funnel" x="3" y="2" width="26" height="26"/></svg></div>
        <div class="fb m"><svg class="ic" viewBox="0 0 32 32"><use href="#move" x="2" y="1" width="28" height="28"/></svg></div>
        <div class="fb m"><svg class="ic"><use href="#selr"/></svg></div>
        <div class="fb m"><svg class="ic" viewBox="0 0 32 32"><path d="M4 2h3v25H4z" fill="#5b86c8"/><path d="M9 2h12v6H9z" fill="#f09a9a" stroke="#d05a5a"/><path d="M9 11h17v8H9z" fill="#9fd4ec" stroke="#4a90b5"/><path d="M10 24l5-4v3h8v2h-8v3z" fill="#8fb2ea"/></svg></div>
        <div class="d-flex align-items-center" style="width:3px"><div class="vsep ms-1" style="height:32px"></div></div>
        <div class="fb"><svg class="ic"><use href="#chip"/></svg></div>
        <div class="fb m"><svg class="ic"><use href="#wire"/></svg></div>
        <div class="fb m"><svg class="ic"><use href="#gndr"/></svg></div>
        <div class="fb m"><svg class="ic"><use href="#entry"/></svg></div>
        <div class="fb m"><svg class="ic"><use href="#sheet"/></svg></div>
        <div class="fb m"><svg class="ic"><use href="#d1"/></svg></div>
        <div class="fb m"><svg class="ic" viewBox="0 0 32 32"><circle cx="19" cy="15" r="12" fill="none" stroke="#ee5f62" stroke-width="1.700"/><path d="M0 15h7" stroke="#ee5f62" stroke-width="2"/><text x="19" y="22" text-anchor="middle" class="serif" font-size="21" fill="#ee5f62">i</text></svg></div>
        <div class="fb m"><svg class="ic" viewBox="0 0 32 32"><text x="16" y="29" text-anchor="middle" class="serif" font-weight="700" font-size="40" fill="#6ba7ec">A</text></svg></div>
        <div class="fb m"><svg class="ic" viewBox="0 0 32 32"><path d="M4 25A14 14 0 1128 25" fill="none" stroke="#5f97dc" stroke-width="2"/></svg></div>
        <div class="fb m"><svg class="ic" viewBox="0 0 32 32"><path d="M2 16h28" stroke="#b5702a" stroke-width="4"/><path d="M12 6h8l6 10-6 10h-8L6 16z" fill="#fbc93c" stroke="#d99a1c"/></svg></div>
      </div>
    </div>
    <div class="d-flex"><div class="act fw-bold d-flex align-items-center justify-content-center" style="width:71px;height:30px;border:1px solid #222;padding-top:2px">Editor</div></div>
  </section>

  <aside class="rail d-flex flex-column" style="margin-left:6px">
    <div class="vtab" style="height:120px">Components</div><div class="vtab" style="height:105px">Comments</div><div class="vtab" style="height:99px;letter-spacing:-.5px">Properties</div><div class="vtab" style="height:84px">SCH List</div>
  </aside>
</main>

<footer class="status d-flex align-items-center">
  <span style="margin-left:8px;width:158px;letter-spacing:-.34px">X:-500mil Y:400mil</span><span style="width:483px;letter-spacing:-.6px">Grid:100mil</span>
  <div class="vsep" style="height:28px"></div><div class="vsep" style="height:28px;margin-left:648px"></div>
  <div class="panels ms-auto me-1 d-flex align-items-center justify-content-center" style="letter-spacing:-.6px">Panels</div>
</footer>

<footer class="taskbar d-flex align-items-center position-relative">
  <div class="app"><svg width="36" height="36" viewBox="0 0 36 36" fill="url(#gb)"><path d="M1 1h16.500v16.500H1zM18.500 1H36v16.500H18.500zM1 18.500h16.500V36H1zM18.500 18.500H36V36H18.500z"/></svg></div>
  <div class="app"><svg width="36" height="36" viewBox="0 0 36 36"><rect x="0" y="10" width="27" height="25" rx="2" fill="#2b2b2b"/><rect x="9" y="1" width="27" height="25" rx="2" fill="#f6f6f6" stroke="#ddd"/><path d="M9.500 10H27v16H9.500z" fill="#bfc0c1"/></svg></div>
  <div class="app run"><svg width="36" height="36" viewBox="0 0 36 36"><path d="M0 4q0-2 2-2h10l4 3v6H0z" fill="#e09a06"/><path d="M0 8h12l4-3h18q2 0 2 2v25q0 2-2 2H2q-2 0-2-2z" fill="#ffd04a"/><path d="M6 34v-7q0-3 3-3h18q3 0 3 3v7z" fill="#1272cc"/><path d="M11 29h14" stroke="#0b4f94" stroke-width="2"/></svg></div>
  <div class="app"><svg width="36" height="36" viewBox="0 0 36 36"><rect width="36" height="36" rx="5" fill="#1d1e20"/><path d="M18 3l9 5-9 5-9-5z" fill="#e8e8ee"/><path d="M5 11l5 3v4l7 4v10L5 25z" fill="#9a9cab"/><path d="M31 11l-5 3v4l-7 4v10l12-7z" fill="#b9bac6"/><path d="M11 15l7 4 7-4M18 19v10" stroke="#2a78e8" stroke-width="3" fill="none"/></svg></div>
  <div class="app"><svg width="36" height="36" viewBox="0 0 36 36" fill="none"><path d="M6 22Q3 4 19 4q13 0 13 10-1 4-8 4-11-2-20 8-1 8 13 8 11 0 15-8" stroke="url(#ge)" stroke-width="5"/><path d="M8 25q11 1 16-7" stroke="#1586e2" stroke-width="5"/><path d="M9 14q5-3 14-1" stroke="#d0e5eb" stroke-width="4"/></svg></div>
  <div class="app run"><svg width="36" height="36" viewBox="0 0 36 36"><circle cx="18" cy="18" r="18" fill="#1680d3"/><path d="M1 13Q5 0 18 0t18 15q1 9-9 10-8 0-6-4 4-6-3-9-9-4-17 1z" fill="#36c4c9"/><path d="M22 1q13 3 14 14 0 9-9 10-8 0-6-4 3-4 1-8z" fill="#5bd95e"/><path d="M14 15q-4 12 7 15 6 1 12-2-6 8-15 8Q6 34 6 24q1-8 8-9z" fill="#1253a0"/><path d="M15 15q6-2 6 2t-2 5q2 5 12 3-4 5-10 3-9-4-6-13z" fill="#d0e5eb"/></svg></div>
  <div class="app on"><svg width="40" height="40"><use href="#altium"/></svg></div>
  <div class="app run"><svg width="36" height="36" viewBox="0 0 36 36"><rect width="36" height="36" rx="6" fill="#fb2f4e"/><g fill="none" stroke="#fff" stroke-width="3" stroke-linecap="round"><path d="M25 7q-5-2-5 3l2 10q0 4-3.500 4T15 20q0-4 6-5 7 0 8 7-1 9-11 9-10-1-10-11 1-7 7-9"/></g></svg></div>
  <div class="app run"><svg width="36" height="36" viewBox="0 0 36 36"><path d="M2 23Q1 2 20 1q14 1 13 16-1 17-16 18-5 0-4-6 0-5-4-4-4 3-7-2z" fill="#2ba6e4"/><circle cx="9" cy="11" r="3.500" fill="#3fa046"/><circle cx="17" cy="7" r="3.300" fill="#f7b520"/><circle cx="6" cy="19" r="3.300" fill="#e0502a"/><circle cx="18" cy="20" r="3" fill="#d0e5eb"/><path d="M27 17v17" stroke="#a85e1c" stroke-width="3"/><path d="M23 9h8v6l-3 4h-2l-3-4z" fill="#ead3a8"/></svg></div>
  <div class="app run"><svg width="38" height="38" viewBox="0 0 38 38"><rect x="0" y="1" width="28" height="28" rx="3" fill="#f3f0ee"/><path d="M5 20V6h14" fill="none" stroke="#d83b10" stroke-width="4" stroke-dasharray="4 2"/><path d="M22 8v20M8 23h22" stroke="#98a4a9" stroke-width="4"/><circle cx="33" cy="21" r="3.500" fill="none" stroke="#1799d6" stroke-width="3"/><circle cx="20" cy="34" r="3.500" fill="none" stroke="#1799d6" stroke-width="3"/></svg></div>
  <div class="ms-auto d-flex align-items-center" style="padding-right:32px">
    <svg width="17" height="11" viewBox="0 0 17 11"><path d="M1 10l7.500-8L16 10" fill="none" stroke="#111" stroke-width="2"/></svg>
    <svg width="26" height="26" viewBox="0 0 26 26" style="margin:0 23px 0 27px"><path d="M1 13A11 11 0 0122 7V1M22 7.500h-7M1 25v-7h7M3 19q4 6 11 5" fill="none" stroke="#111" stroke-width="1.400"/><circle cx="19" cy="19" r="6" fill="#ff9a08"/></svg>
    <span style="font-size:23px;letter-spacing:0">英</span>
    <svg width="24" height="20" viewBox="0 0 24 20" style="margin:0 12px 0 25px" fill="none"><path d="M1 7q11-11 22 0M4 11q8-8 16 0" stroke="#9fb2b8" stroke-width="1.600"/><path d="M7 13.500q5-5 10 0" stroke="#111" stroke-width="2"/><circle cx="12" cy="17" r="2" fill="#111"/></svg>
    <svg width="25" height="20" viewBox="0 0 25 20" fill="none" stroke="#111" stroke-width="1.800"><path d="M1 7h4l5-5v16l-5-5H1zM14 7q2 3 0 6M17 4q5 6 0 12"/><path d="M20 1q7 9 0 18" stroke="#9fb2b8"/></svg>
    <svg width="25" height="20" viewBox="0 0 25 20" style="margin:0 25px 0 11px"><path d="M7 4h13q2 0 2 2v10q0 2-2 2H4q-2 0-2-2V9" fill="none" stroke="#111" stroke-width="1.600"/><path d="M9 7h10v8H5v-4h3zM23 8h2v5h-2zM4 0L1 6h3l-1 4 5-6H5l1-4z" fill="#111"/></svg>
    <div class="text-end clock"><div>16:07</div><div>2024/1/13</div></div>
    <svg width="20" height="24" viewBox="0 0 20 24" style="margin-left:13px" fill="#154a58"><path d="M10 0q8 1 8 9v6l2 4H0l2-4V9q0-8 8-9zM6 21h8q-1 3-4 3t-4-3z"/></svg>
  </div>
  <span class="watermark">CSDN @Lin_0603</span>
</footer>
</div>
<script>
const NS="http://www.w3.org/2000/svg";
// sheet grid: every tenth line is a major one
const g=document.getElementById("gridlines");
function line(d,major){const p=document.createElementNS(NS,"path");p.setAttribute("d",d);p.setAttribute("stroke",major?"#d9d9d6":"#ededea");g.appendChild(p);}
for(const pass of [0,1])for(let i=-8;i<45;i++){
  const major=i%10===0;if(+major!==pass)continue;
  const x=Math.round(982.3+i*34.13-.3)+.5,y=Math.round(468.3+i*34.13-.3)+.5;
  if(x>710&&x<2245)line(`M${x} 230V1424`,major);
  if(y>230&&y<1424)line(`M710 ${y}H2245`,major);
}
// component pin labels: fixed 17px cells, horizontally condensed
const L=document.getElementById("labels"),C=17,K=.74;
function label(s,x,y,end,rot){
  const t=document.createElementNS(NS,"text"),x0=end?-s.length*C:0;
  t.setAttribute("transform",`translate(${x} ${y})${rot?" rotate(-90)":""} scale(${K} 1)`);
  t.setAttribute("x",[...s].map((c,i)=>((x0+(i+.5)*C)/K).toFixed(1)).join(" "));
  t.textContent=s;L.appendChild(t);
}
const ys=[741,775,809,844,878,912];
["A1B12","A4B9","A5","A6","A7","A8"].forEach((s,i)=>label(s,1349,ys[i]-4.5,true));
["B8","B7","B6","B5","B1A12","B4A9"].forEach((s,i)=>label(s,1641,ys[i]-4.5));
["GND","VBUS","CC1","DP1","DN1","SBU1"].forEach((s,i)=>label(s,1399,ys[i]+12.5));
["SBU2","DN2","DP2","CC2","GND","VBUS"].forEach((s,i)=>label(s,1591,ys[i]+12.5,true));
[["12",1443,679],["14",1563,679],["12",1460,762],["14",1580,762],["13",1460,921],["15",1580,921],["13",1443,1005],["15",1563,1005]].forEach(a=>label(a[0],a[1],a[2],false,true));
</script>
</body>
</html>
